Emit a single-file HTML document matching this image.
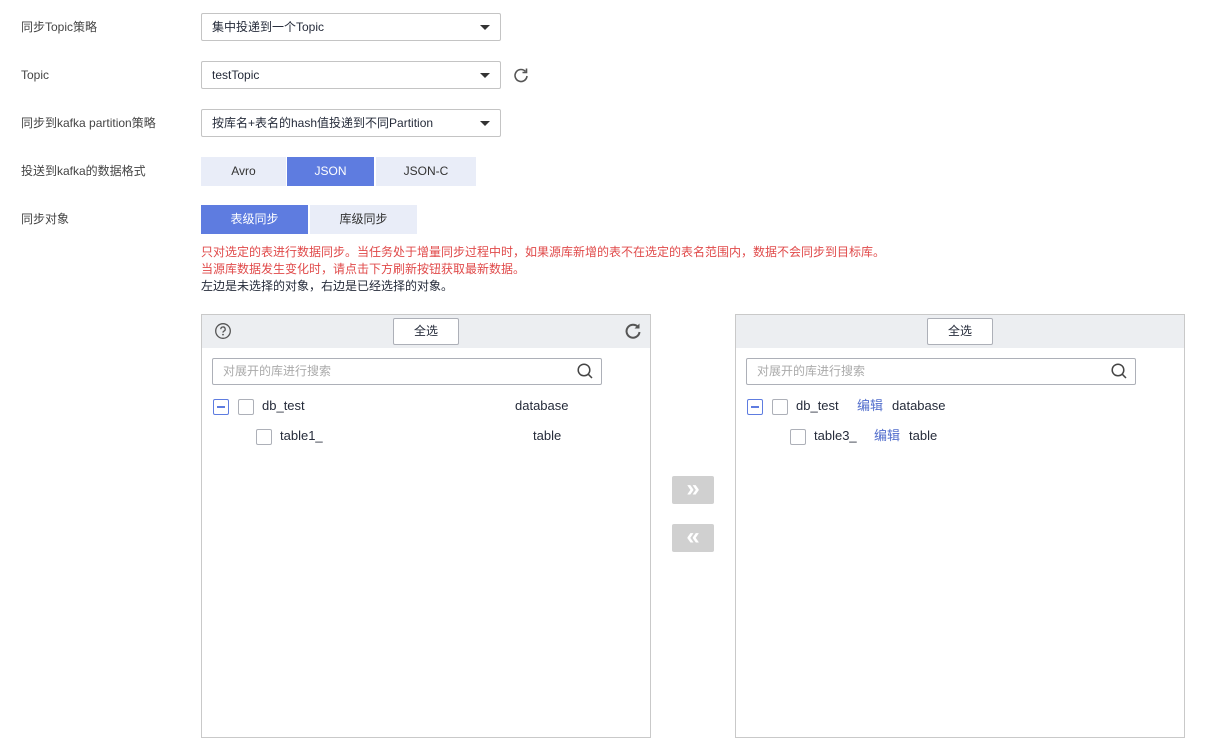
<!DOCTYPE html>
<html><head><meta charset="utf-8"><style>
*{box-sizing:border-box;margin:0;padding:0}
body{width:1210px;height:742px;background:#fff;position:relative;overflow:hidden;font-family:"Liberation Sans","Noto Sans CJK SC",sans-serif;font-size:12px;color:#333}
.a{position:absolute}
.lbl{left:21px;line-height:16px;color:#444}
.sel{left:201px;width:300px;height:28px;border:1px solid #c4c4c4;border-radius:2px;padding-left:10px;line-height:26px;color:#252b3a}
.sel:after{content:"";position:absolute;right:10px;top:11px;border-left:5px solid transparent;border-right:5px solid transparent;border-top:5px solid #333}
.seg{height:29px;line-height:29px;text-align:center;background:#e9edf8;color:#333}
.on{background:#5e7ce0;color:#fff}
.panel{border:1px solid #c9c9c9;top:314px;width:450px;height:424px}
.hd{position:absolute;left:0;top:0;right:0;height:33px;background:#eceef1}
.all{position:absolute;top:3px;width:66px;height:27px;background:#fff;border:1px solid #adb0b8;border-radius:2px;text-align:center;line-height:25px;color:#252b3a}
.srch{position:absolute;left:10px;top:43px;width:390px;height:27px;border:1px solid #adb0b8;border-radius:2px;padding-left:10px;line-height:25px;color:#aaa}
.cb{position:absolute;width:16px;height:16px;border:1px solid #adb0b8;border-radius:2px;background:#fff}
.mn{position:absolute;width:16px;height:16px;border:1px solid #5e7ce0;border-radius:2px}
.mn:after{content:"";position:absolute;left:3px;top:6px;width:8px;height:2px;background:#5e7ce0}
.t{position:absolute;font-size:13px;line-height:16px;color:#252b3a}
.blue{color:#526ecc}
.mv{left:672px;width:42px;height:28px;background:#d0d0d0;color:#fff;text-align:center;line-height:25px;font-size:24px;font-weight:bold;border-radius:2px}
</style></head><body>
<div class="a lbl" style="top:19px">同步Topic策略</div>
<div class="a lbl" style="top:67px">Topic</div>
<div class="a lbl" style="top:115px">同步到kafka partition策略</div>
<div class="a lbl" style="top:163px">投送到kafka的数据格式</div>
<div class="a lbl" style="top:211px">同步对象</div>

<div class="a sel" style="top:13px">集中投递到一个Topic</div>
<div class="a sel" style="top:61px">testTopic</div>
<svg class="a" style="left:512px;top:66px" width="18" height="18" viewBox="0 0 18 18"><path d="M13.5 5.5A6 6 0 1 0 15 10" fill="none" stroke="#555" stroke-width="1.6"/><path d="M14.5 2.5v4h-4" fill="none" stroke="#555" stroke-width="1.6"/></svg>
<div class="a sel" style="top:109px">按库名+表名的hash值投递到不同Partition</div>

<div class="a seg" style="left:201px;top:157px;width:85px">Avro</div>
<div class="a seg on" style="left:287px;top:157px;width:87px">JSON</div>
<div class="a seg" style="left:376px;top:157px;width:100px">JSON-C</div>

<div class="a seg on" style="left:201px;top:205px;width:107px">表级同步</div>
<div class="a seg" style="left:310px;top:205px;width:107px">库级同步</div>

<div class="a" style="left:201px;top:244px;line-height:17px;color:#e04a4a">只对选定的表进行数据同步。当任务处于增量同步过程中时，如果源库新增的表不在选定的表名范围内，数据不会同步到目标库。<br>当源库数据发生变化时，请点击下方刷新按钮获取最新数据。<br><span style="color:#252b3a">左边是未选择的对象，右边是已经选择的对象。</span></div>

<div class="a panel" style="left:201px">
 <div class="hd"></div>
 <svg style="position:absolute;left:12px;top:7px" width="18" height="18" viewBox="0 0 18 18"><circle cx="9" cy="9" r="7.3" fill="none" stroke="#555" stroke-width="1.3"/><path d="M6.8 7.2a2.2 2.2 0 1 1 3 2c-.6.3-.8.7-.8 1.4" fill="none" stroke="#555" stroke-width="1.3"/><circle cx="9" cy="12.6" r=".9" fill="#555"/></svg>
 <div class="all" style="left:191px">全选</div>
 <svg style="position:absolute;left:421px;top:6px" width="20" height="20" viewBox="0 0 20 20"><path d="M15 6A6.5 6.5 0 1 0 16.5 11" fill="none" stroke="#555" stroke-width="2"/><path d="M16.5 2.5v5h-5z" fill="#555"/></svg>
 <div class="srch">对展开的库进行搜索</div>
 <svg style="position:absolute;left:374px;top:47px" width="18" height="18" viewBox="0 0 18 18"><circle cx="8" cy="8" r="5.8" fill="none" stroke="#444" stroke-width="1.5"/><path d="M12.2 12.2l3.8 3.8" stroke="#444" stroke-width="1.5"/></svg>
 <div class="mn" style="left:11px;top:84px"></div>
 <div class="cb" style="left:36px;top:84px"></div>
 <div class="t" style="left:60px;top:83px">db_test</div>
 <div class="t" style="left:313px;top:83px">database</div>
 <div class="cb" style="left:54px;top:114px"></div>
 <div class="t" style="left:78px;top:113px">table1_</div>
 <div class="t" style="left:331px;top:113px">table</div>
</div>

<div class="a mv" style="top:476px">»</div>
<div class="a mv" style="top:524px">«</div>

<div class="a panel" style="left:735px">
 <div class="hd"></div>
 <div class="all" style="left:191px">全选</div>
 <div class="srch">对展开的库进行搜索</div>
 <svg style="position:absolute;left:374px;top:47px" width="18" height="18" viewBox="0 0 18 18"><circle cx="8" cy="8" r="5.8" fill="none" stroke="#444" stroke-width="1.5"/><path d="M12.2 12.2l3.8 3.8" stroke="#444" stroke-width="1.5"/></svg>
 <div class="mn" style="left:11px;top:84px"></div>
 <div class="cb" style="left:36px;top:84px"></div>
 <div class="t" style="left:60px;top:83px">db_test</div>
 <div class="t blue" style="left:121px;top:83px">编辑</div>
 <div class="t" style="left:156px;top:83px">database</div>
 <div class="cb" style="left:54px;top:114px"></div>
 <div class="t" style="left:78px;top:113px">table3_</div>
 <div class="t blue" style="left:138px;top:113px">编辑</div>
 <div class="t" style="left:173px;top:113px">table</div>
</div>
</body></html>
